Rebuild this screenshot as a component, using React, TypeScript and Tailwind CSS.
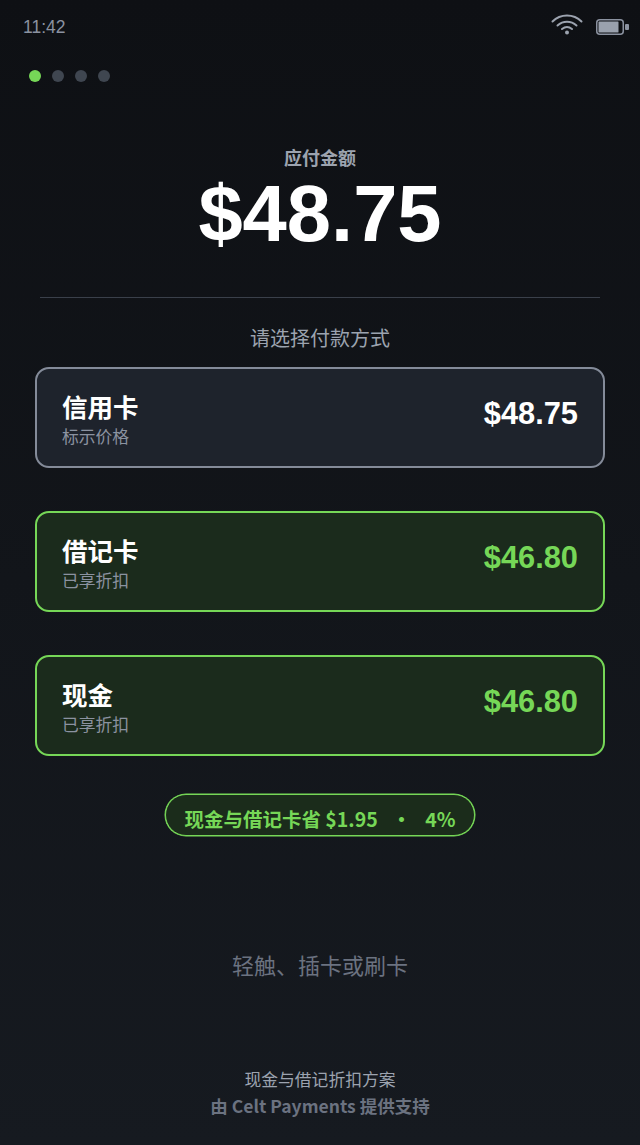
const cjk = "font-['Liberation_Sans','Noto_Sans_CJK_SC',sans-serif]";

function Card({ name, sub, price, green }: { name: string; sub: string; price: string; green?: boolean }) {
  return (
    <div className={`mx-[35px] h-[101px] rounded-[14px] border-2 flex items-center justify-between pl-[25px] pr-[25px] ${green ? 'border-[#76d757] bg-[#1b2b1c]' : 'border-[#848b99] bg-[#1e232c]'}`}>
      <div className="flex flex-col mt-[4px]">
        <div className="text-[25.5px] leading-[32px] font-bold text-white">{name}</div>
        <div className="text-[16.800px] leading-[21px] text-[#8b92a0] mt-[3px]">{sub}</div>
      </div>
      <div className={`text-[30.800px] leading-[36px] font-bold mb-[8px] ${green ? 'text-[#76d757]' : 'text-white'}`}>{price}</div>
    </div>
  );
}

export default function App() {
  return (
    <div className={`${cjk} w-[640px] h-[1145px] overflow-hidden flex flex-col bg-gradient-to-b from-[#0e1014] to-[#161a20]`}>
      <div className="h-[55px] flex items-center justify-between pl-[23px] pr-[11px]">
        <span className="text-[17.500px] font-light text-[#8b92a0]">11:42</span>
        <div className="flex items-center gap-[13px] mb-[1px]">
          <svg width="32" height="22" viewBox="0 0 32 22" fill="none" stroke="#9ca3af" strokeWidth="2" strokeLinecap="round" className="mb-[6px]">
            <path d="M1.500 8.500c8-8 21-8 29 0" />
            <path d="M6.500 12.500c5.500-5 13.500-5 19 0" />
            <path d="M11 16c3-2.500 7-2.500 10 0" />
            <circle cx="16" cy="19.500" r="2" fill="#9ca3af" stroke="none" />
          </svg>
          <svg width="33" height="16" viewBox="0 0 33 16" fill="none">
            <rect x="0.750" y="0.750" width="26.500" height="14.500" rx="3" stroke="#8b92a0" strokeWidth="1.500" />
            <rect x="2.500" y="2.500" width="20" height="11" rx="0.500" fill="#9aa1ad" />
            <rect x="29" y="5" width="4" height="6" rx="1" fill="#8b92a0" />
          </svg>
        </div>
      </div>
      <div className="flex gap-[11px] pl-[29px] mt-[15px]">
        <div className="w-[12px] h-[12px] rounded-full bg-[#76d757]" />
        <div className="w-[12px] h-[12px] rounded-full bg-[#3f4650]" />
        <div className="w-[12px] h-[12px] rounded-full bg-[#3f4650]" />
        <div className="w-[12px] h-[12px] rounded-full bg-[#3f4650]" />
      </div>
      <div className="text-center mt-[65px] text-[18px] leading-[24px] font-bold text-[#9ca3af]">应付金额</div>
      <div className="text-center text-[79.500px] leading-[88px] font-bold text-white mt-[-1px]">$48.75</div>
      <div className="mx-[40px] mt-[39px] h-px bg-[#3a404a]" />
      <div className="text-center mt-[27px] text-[20px] leading-[28px] text-[#9ca3af]">请选择付款方式</div>
      <div className="mt-[14px] flex flex-col gap-[43px]">
        <Card name="信用卡" sub="标示价格" price="$48.75" />
        <Card name="借记卡" sub="已享折扣" price="$46.80" green />
        <Card name="现金" sub="已享折扣" price="$46.80" green />
      </div>
      <div className="flex justify-center mt-[38px]">
        <div className="w-[310px] h-[42px] rounded-full border border-[#76d757] shadow-[0_0_0_0.5px_#76d757] bg-[#1b2c1b] flex items-center justify-center pt-[7px] text-[19.500px] leading-[24px] font-semibold text-[#76d757] font-['Noto_Sans_CJK_SC',sans-serif] gap-[14px]">
          <span>现金与借记卡省 $1.95</span><span>•</span><span>4%</span>
        </div>
      </div>
      <div className="text-center mt-[115px] text-[22px] leading-[32px] text-[#6b7280]">轻触、插卡或刷卡</div>
      <div className="text-center mt-[86px] text-[16.800px] leading-[24px] text-[#9ca3af]">现金与借记折扣方案</div>
      <div className="text-center mt-[1px] text-[17.500px] leading-[24px] font-bold text-[#6b7280] font-['Noto_Sans_CJK_SC',sans-serif]">由 Celt Payments 提供支持</div>
    </div>
  );
}
